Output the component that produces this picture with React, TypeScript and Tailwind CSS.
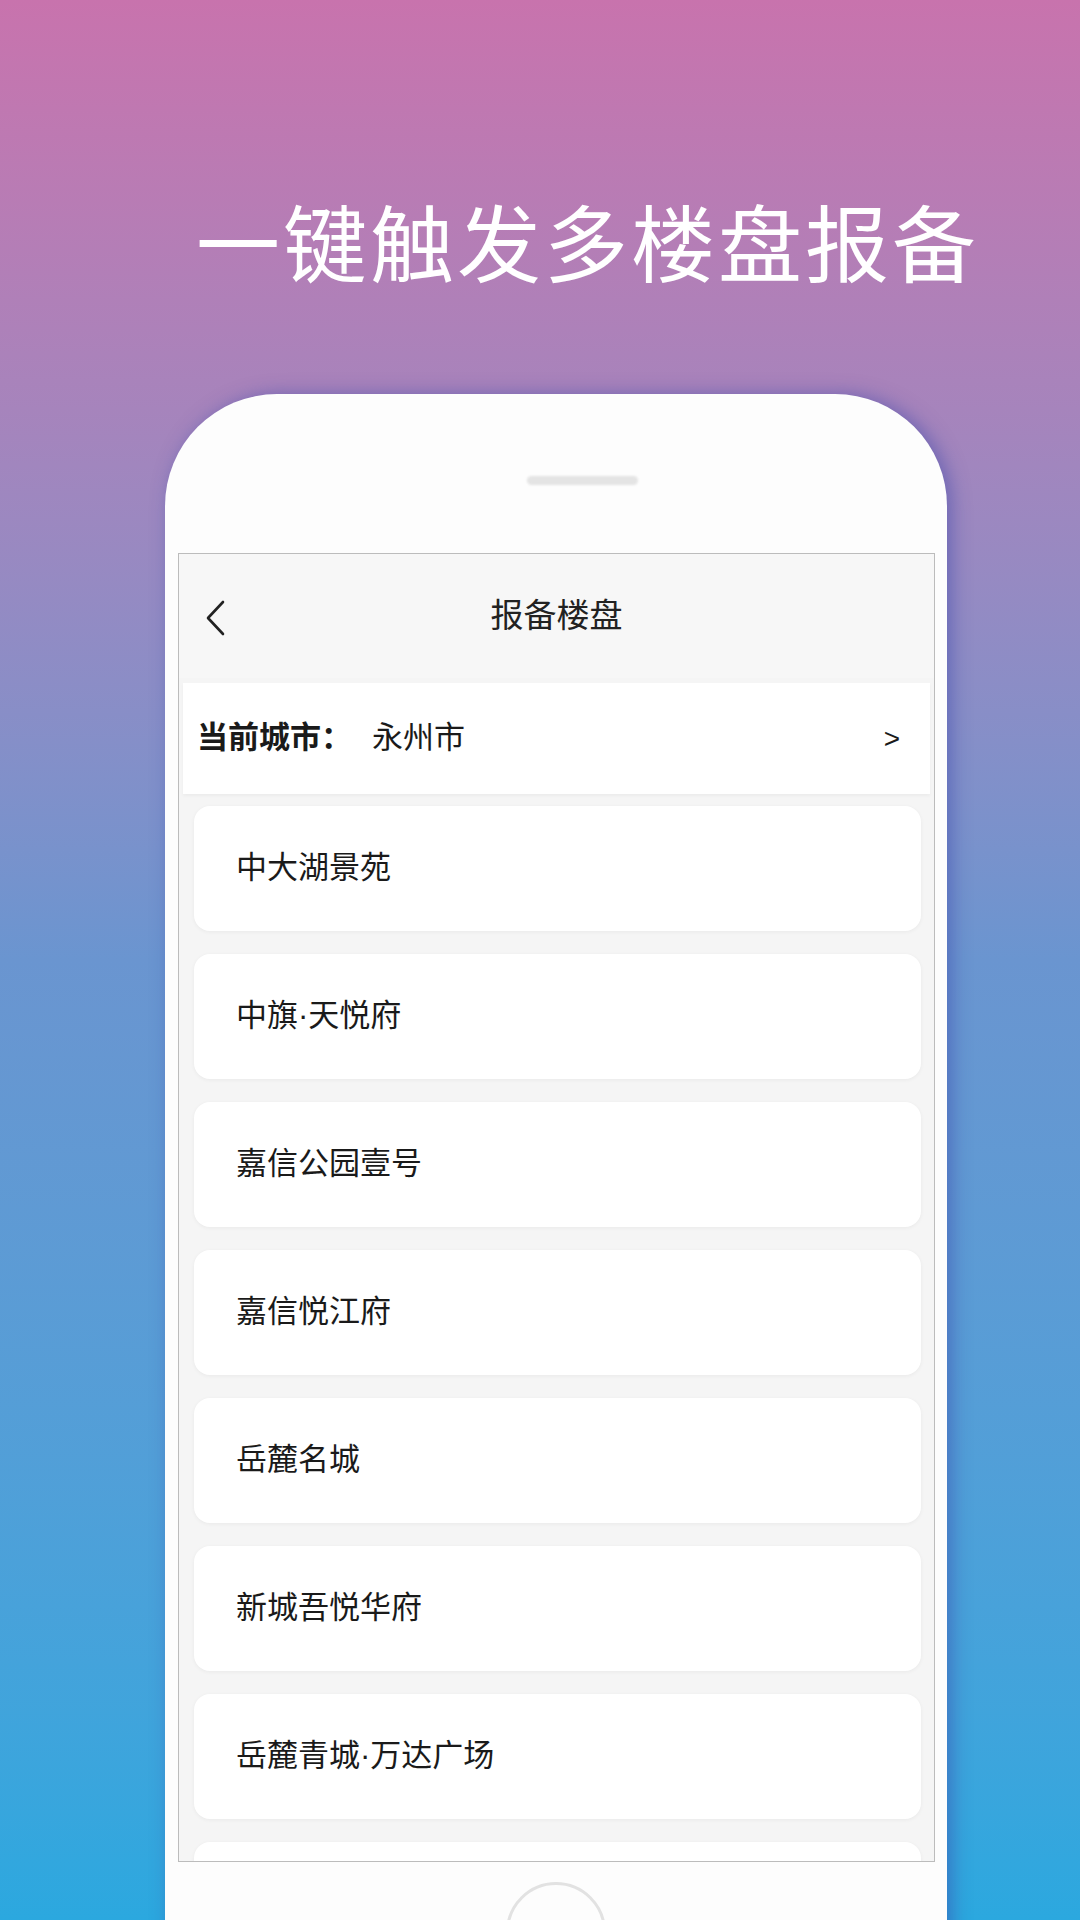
const projects = [
  "中大湖景苑",
  "中旗·天悦府",
  "嘉信公园壹号",
  "嘉信悦江府",
  "岳麓名城",
  "新城吾悦华府",
  "岳麓青城·万达广场",
  "",
];

function BackIcon() {
  return (
    <svg width="22" height="36" viewBox="0 0 22 36" fill="none">
      <path d="M19 2 L4 18 L19 34" stroke="#222" strokeWidth="2.6" strokeLinecap="round" strokeLinejoin="round" />
    </svg>
  );
}

export default function App() {
  return (
    <div
      className="w-[1080px] h-[1920px] overflow-hidden bg-gradient-to-b from-[#c873ad] via-[#6a95d0] to-[#2ba8df]"
      style={{ fontFamily: '"Liberation Sans", "Noto Sans CJK SC", sans-serif' }}
    >
      <h1
        className="pt-[198px] pl-[196px] text-[84px] leading-none tracking-[3px] text-white font-normal"
        style={{ fontFamily: '"Noto Sans CJK SC", sans-serif' }}
      >
        一键触发多楼盘报备
      </h1>

      <div className="mt-[112px] ml-[165px] w-[782px] h-[1620px] rounded-t-[112px] bg-[#fdfdfd] shadow-[5px_0_18px_rgba(60,70,170,0.5)] flex flex-col">
        {/* speaker */}
        <div className="h-[159px] shrink-0">
          <div className="mt-[82px] ml-[362px] w-[111px] h-[9px] rounded-full bg-[#e4e4e4] blur-[1px]" />
        </div>

        {/* screen */}
        <div className="ml-[13px] w-[757px] h-[1309px] shrink-0 border border-[#bcbcbc] bg-[#f5f5f5] overflow-hidden flex flex-col">
          <div className="h-[124px] shrink-0 bg-[#f7f7f7] flex items-center relative">
            <div className="absolute left-[25px] top-[46px]">
              <BackIcon />
            </div>
            <div className="w-full text-center text-[33px] text-[#222]">报备楼盘</div>
          </div>

          <div className="mt-[5px] mx-[4px] h-[111px] shrink-0 bg-white flex items-center pl-[14px] pr-[30px] text-[31px] text-[#1a1a1a] shadow-[0_2px_3px_rgba(0,0,0,0.04)]">
            <span className="font-bold">当前城市：</span>
            <span className="ml-[20px]">永州市</span>
            <span className="ml-auto text-[28px]">&gt;</span>
          </div>

          <div className="mt-[12px] ml-[15px] mr-[13px] flex flex-col gap-[23px]">
            {projects.map((name, i) => (
              <div
                key={i}
                className="h-[125px] shrink-0 rounded-[16px] bg-white shadow-[0_1px_4px_rgba(0,0,0,0.05)] flex items-center pl-[42px] text-[31px] text-[#1a1a1a]"
              >
                {name}
              </div>
            ))}
          </div>
        </div>

        {/* home button */}
        <div className="flex justify-center mt-[20px] shrink-0">
          <div className="w-[100px] h-[100px] rounded-full border-[3px] border-[#e2e2e2]" />
        </div>
      </div>
    </div>
  );
}
